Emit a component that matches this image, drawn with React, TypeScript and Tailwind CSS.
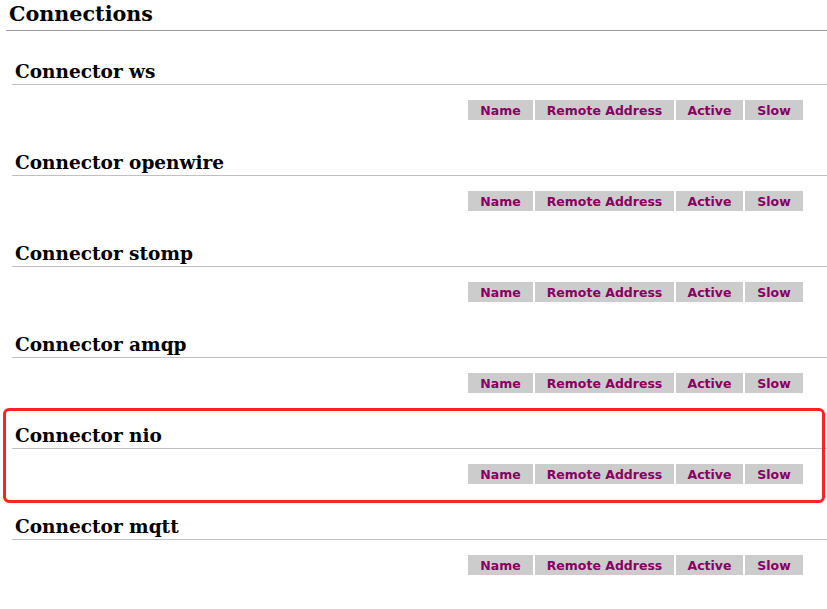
import React from "react";

const connectors = ["ws", "openwire", "stomp", "amqp", "nio", "mqtt"];

const cols = [
  { label: "Name", w: "w-[65px]" },
  { label: "Remote Address", w: "w-[139px]" },
  { label: "Active", w: "w-[67px]" },
  { label: "Slow", w: "w-[58px]" },
];

export default function App() {
  return (
    <div className="relative w-[827px] h-[609px] bg-white overflow-hidden pl-[6px]">
      <h1
        className="h-[31px] border-b border-[#999999] pl-[3px] text-[20.7px] leading-[29px] font-bold text-black"
        style={{ fontFamily: '"DejaVu Serif", Georgia, serif' }}
      >
        Connections
      </h1>
      <div className="ml-[6px]">
        {connectors.map((c, i) => (
          <div key={c} className={i === 0 ? "mt-[29px]" : "mt-[31px]"}>
            <h2
              className="h-[25px] border-b border-[#c0c0c0] pl-[3px] text-[18.5px] leading-[23px] font-bold text-black"
              style={{ fontFamily: '"DejaVu Serif", Georgia, serif' }}
            >
              Connector {c}
            </h2>
            <div className="mt-[15px] flex justify-end pr-[24px] gap-[2px]">
              {cols.map((col) => (
                <div
                  key={col.label}
                  className={`${col.w} h-[20px] bg-[#cccccc] flex items-center justify-center pt-[2px] text-[12.5px] font-bold text-[#880060]`}
                  style={{ fontFamily: '"DejaVu Sans", Verdana, sans-serif' }}
                >
                  {col.label}
                </div>
              ))}
            </div>
          </div>
        ))}
      </div>
      <div className="absolute left-[3px] top-[408px] w-[822px] h-[95px] border-[3px] border-[#ff2222] rounded-[6px] pointer-events-none" />
    </div>
  );
}
